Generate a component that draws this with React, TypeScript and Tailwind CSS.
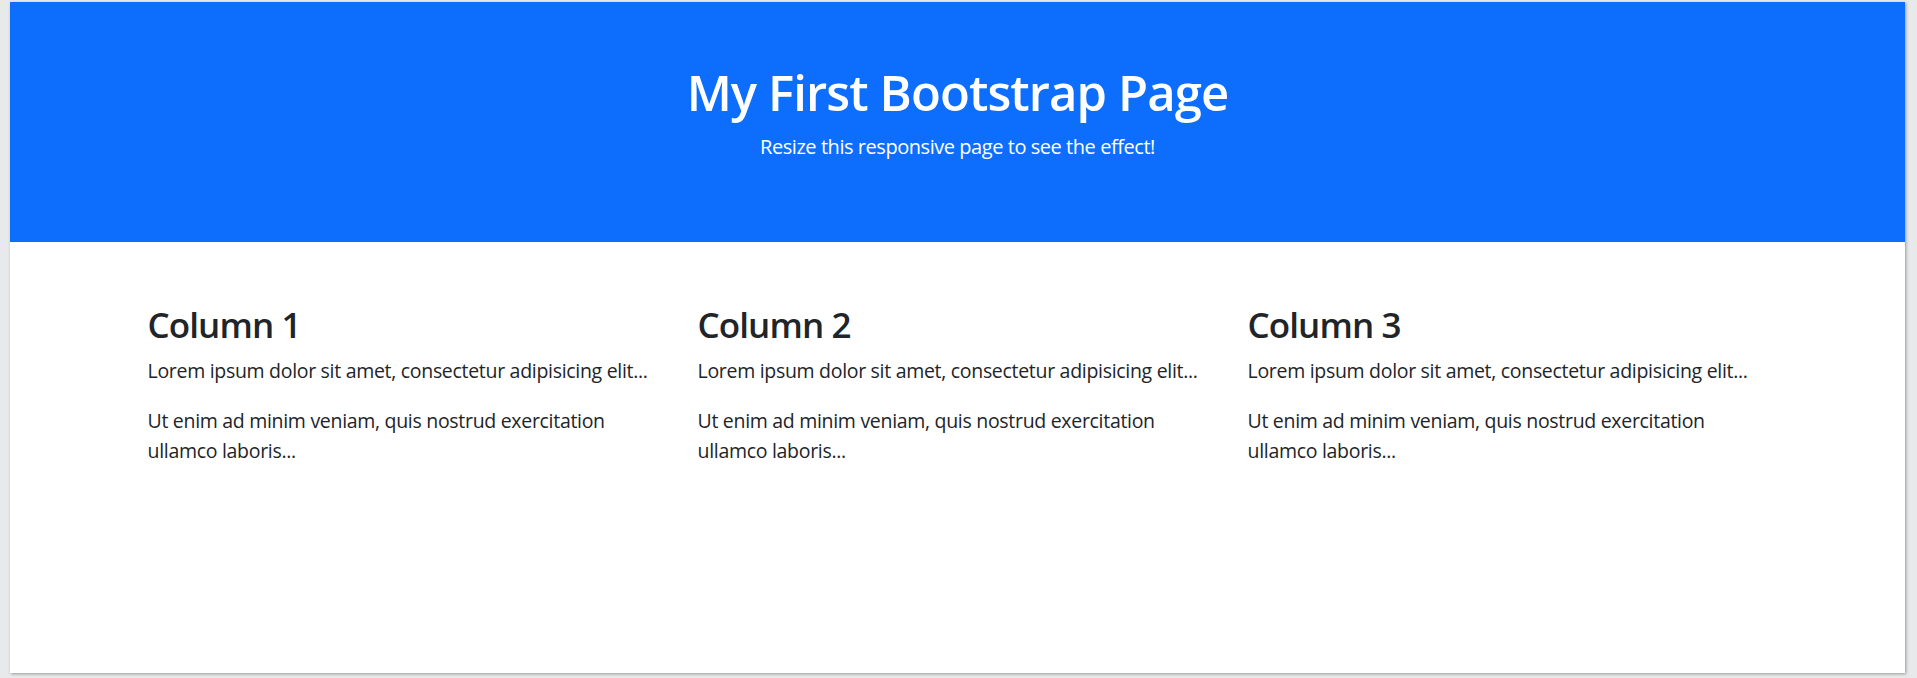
import React from "react";

const cols = ["Column 1", "Column 2", "Column 3"];

export default function App() {
  return (
    <div className="w-[1917px] h-[678px] bg-[#e8e9ea] pl-[10px] pt-[2px] overflow-hidden">
      <div
        className="w-[1895px] h-[671px] bg-white shadow-[1px_1px_3px_rgba(0,0,0,0.35)] text-[#212529] overflow-hidden"
        style={{ fontFamily: '"Open Sans", "Noto Sans", sans-serif' }}
      >
        <div className="bg-[#0d6efd] text-white text-center p-[60px]">
          <h1 className="text-[49px] leading-[60px] font-semibold mb-[10px] tracking-[-0.9px]">
            My First Bootstrap Page
          </h1>
          <p className="text-[20px] leading-[30px] mb-[20px] tracking-[-0.45px]">
            Resize this responsive page to see the effect!
          </p>
        </div>
        <div className="w-[1650px] mx-auto mt-[56px] grid grid-cols-3">
          {cols.map((c) => (
            <div key={c} className="px-[15px]">
              <h2 className="text-[35px] leading-[48px] font-semibold pt-[3px] mb-[7px] tracking-[-0.9px]">{c}</h2>
              <p className="text-[19.5px] leading-[30px] mb-[20px] tracking-[-0.3px]">
                Lorem ipsum dolor sit amet, consectetur adipisicing elit...
              </p>
              <p className="text-[19.5px] leading-[30px] mb-[20px] tracking-[-0.3px]">
                Ut enim ad minim veniam, quis nostrud exercitation ullamco laboris...
              </p>
            </div>
          ))}
        </div>
      </div>
    </div>
  );
}
